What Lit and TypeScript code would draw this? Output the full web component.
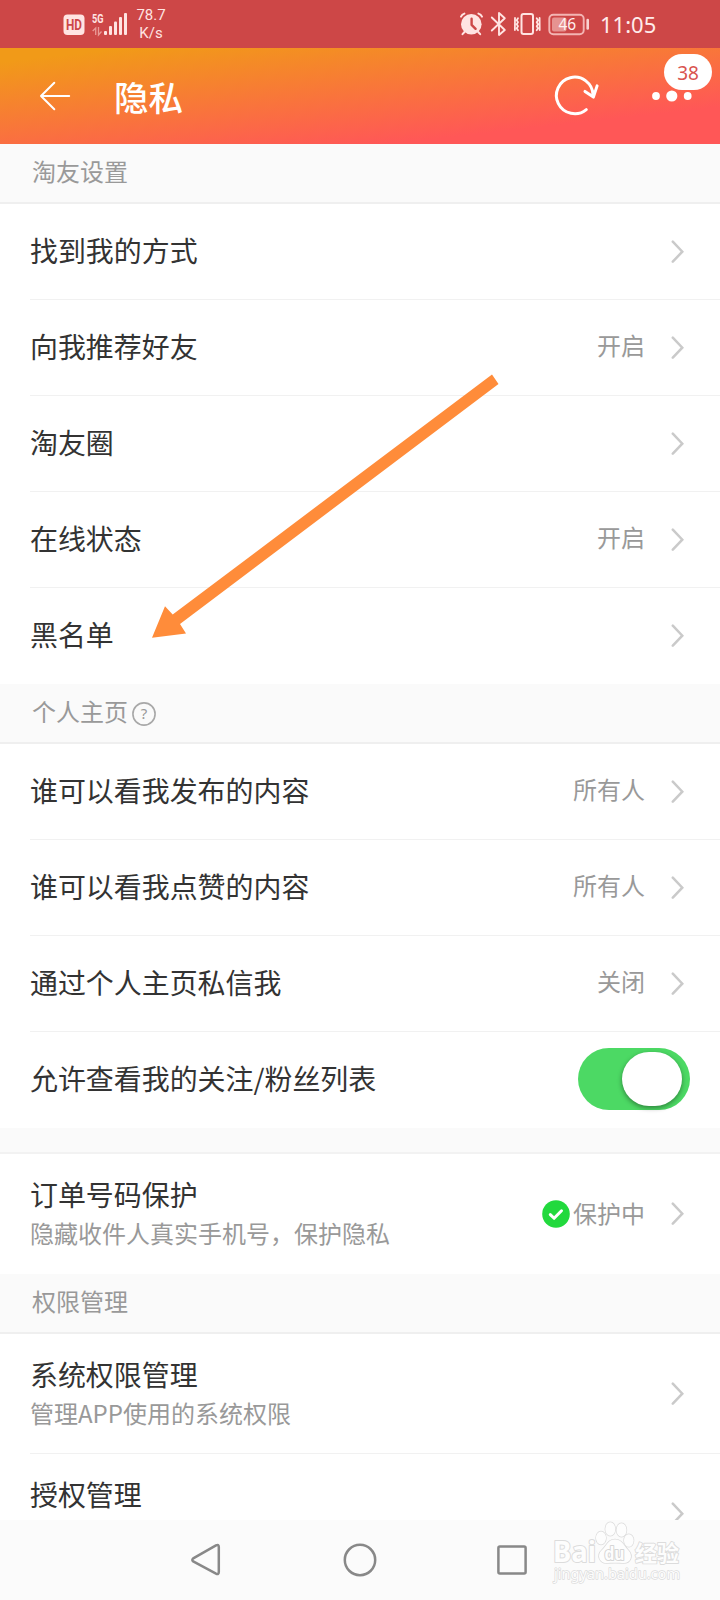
import { LitElement, html, css, svg, nothing } from "lit";
import { customElement, property } from "lit/decorators.js";

@customElement("status-bar")
class StatusBar extends LitElement {
  static styles = css`
    :host { display: flex; height: 48px; background: #cd4747; color: #ffe4e2; }
    .left { display: flex; align-items: flex-start; padding-left: 60px; flex: 1; }
    .right { display: flex; align-items: flex-start; }
    svg { display: block; }
    .speed { font: 15px/18px Roboto, sans-serif; text-align: center; padding-top: 6px; width: 34px; margin-left: 4px; }
    .time { font: 22px/49px "Noto Sans", sans-serif; width: 129px; padding-left: 9px; box-sizing: border-box; color: #ffeceb; }
  `;
  render() {
    return html`
      <div class="left">
        <svg width="70" height="48" viewBox="60 0 70 48">
          <rect x="63.5" y="14.5" width="21" height="20.5" rx="4" fill="#ffe4e2" />
          <text x="74" y="29.8" text-anchor="middle" textLength="16" lengthAdjust="spacingAndGlyphs" font-family="Roboto" font-weight="700" font-size="14" fill="#cd4747">HD</text>
          <text x="92" y="22.8" textLength="11.5" lengthAdjust="spacingAndGlyphs" font-family="Roboto" font-weight="700" font-size="13" fill="#ffe4e2">5G</text>
          <g stroke="#e99a98" stroke-width="1.3" fill="none"><path d="M95.7 35V28l-3 3M98.5 27v8l3-3.5" /></g>
          <g fill="#ffe4e2">
            <rect x="104" y="31" width="3" height="4" rx="1" />
            <rect x="109" y="26" width="3" height="9" rx="1" />
            <rect x="114" y="21.5" width="3" height="13.5" rx="1" />
            <rect x="119" y="17" width="3" height="18" rx="1" />
            <rect x="124" y="13" width="3" height="22" rx="1" />
          </g>
        </svg>
        <div class="speed">78.7<br />K/s</div>
      </div>
      <div class="right">
        <svg width="141" height="48" viewBox="450 0 141 48" fill="none" stroke="#ffe4e2" stroke-width="2" stroke-linecap="round" stroke-linejoin="round">
          <circle cx="471.3" cy="24.3" r="10.3" fill="#ffe4e2" stroke="none" />
          <path d="M461 16.6Q462 14.4 464.4 13.6M478.4 13.6Q481 14.4 482 16.6M464.5 32l-2 2.2M478.2 32l2 2.2" />
          <path d="M471.6 18.8v6l4 4" stroke="#cd4747" stroke-width="2.4" />
          <path d="M491.8 17.5l13 12.5-5.8 5V13l5.8 5.2-13 12.3" stroke-width="1.9" />
          <rect x="521.5" y="14" width="11.5" height="20" rx="2" />
          <path d="M518 18.2l-1.3 2 1.3 2-1.3 2 1.3 2-1.3 2 1.3 2M515 18l-.1 12M536.7 18.2l1.3 2-1.3 2 1.3 2-1.3 2 1.3 2-1.3 2M539.6 18l.1 12" stroke-width="1.8" />
          <rect x="549.3" y="14.8" width="34.4" height="19.4" rx="4" stroke="#f3b5b3" stroke-width="1.9" />
          <rect x="552" y="17.5" width="14.5" height="14" rx="2" fill="#e69391" stroke="none" />
          <path d="M587.7 20v8.5" stroke="#f9d2d0" stroke-width="2.6" />
          <text x="567.3" y="30" text-anchor="middle" font-family="Noto Sans" font-size="15.5" fill="#fff0ef" stroke="none">46</text>
        </svg>
        <div class="time">11:05</div>
      </div>
    `;
  }
}

@customElement("title-bar")
class TitleBar extends LitElement {
  static styles = css`
    :host { display: flex; position: relative; height: 96px; color: #fff; background: linear-gradient(173.6deg, #f19a18 8%, #ff5757 79%); }
    svg { display: block; }
    .title { flex: 1; padding-left: 34px; font: 500 34.5px/96px "Noto Sans CJK SC", sans-serif; }
    .badge { position: absolute; right: 8px; top: 6px; width: 48px; height: 36px; border-radius: 18px; background: #fff; color: #d9534f; text-align: center; font: 19px/38px "Noto Sans", sans-serif; }
  `;
  render() {
    return html`
      <svg width="80" height="96" viewBox="0 48 80 96" fill="none" stroke="#fff" stroke-width="2" stroke-linecap="round" stroke-linejoin="round">
        <path d="M54.3 82.7L41 96l13.3 13.2M41 96h28.2" />
      </svg>
      <div class="title">隐私</div>
      <svg width="180" height="96" viewBox="540 48 180 96" fill="none" stroke="#fff" stroke-width="3" stroke-linecap="round" stroke-linejoin="round">
        <path d="M586.3 109.6A18.3 18.3 0 1 1 593 95" />
        <path d="M585 91.4l8.4 5.7 3.7-11.2" />
        <g fill="#fff" stroke="none">
          <circle cx="656" cy="96" r="3.9" /><circle cx="671.8" cy="96" r="5.6" /><circle cx="687.7" cy="96" r="3.9" />
        </g>
      </svg>
      <div class="badge">38</div>
    `;
  }
}

@customElement("section-head")
class SectionHead extends LitElement {
  static styles = css`
    :host { display: flex; align-items: center; box-sizing: border-box; height: 60px; padding: 0 32px 4px; background: #fafafa; border-bottom: 2px solid #efefef; color: #999; font: 24px/36px "Noto Sans CJK SC", sans-serif; }
    svg { display: block; margin: 5px 0 0 4px; }
  `;
  @property() label = "";
  @property({ type: Boolean }) help = false;
  render() {
    return html`<span>${this.label}</span>${this.help
      ? html`<svg width="24" height="24" viewBox="0 0 24 24"><circle cx="12" cy="12" r="11.1" fill="none" stroke="#a8a8a8" stroke-width="1.6" /><text x="12" y="17.2" text-anchor="middle" font-family="Noto Sans" font-size="15" fill="#999">?</text></svg>`
      : nothing}`;
  }
}

@customElement("setting-row")
class SettingRow extends LitElement {
  static styles = css`
    :host { display: block; padding-left: 30px; background: #fff; font-family: "Noto Sans CJK SC", sans-serif; }
    .row { display: flex; align-items: center; box-sizing: border-box; height: 96px; padding-right: 36px; border-bottom: 1px solid #f1f1f1; }
    :host([last]) .row { border-bottom-color: transparent; }
    .tall { height: 120px; }
    .text { flex: 1; }
    .name { font-size: 27.95px; line-height: 40px; color: #333; margin-top: -4px; }
    .tall .name { margin-top: -1px; }
    .desc { font-size: 24px; line-height: 38px; min-height: 38px; color: #999; }
    .value { font-size: 24px; line-height: 36px; color: #999; margin: -6px 26px 0 4px; }
    .tall .value { margin: -1px 26px 0 3px; }
    svg { display: block; }
    .toggle { display: flex; justify-content: flex-end; box-sizing: border-box; width: 112px; height: 62px; padding: 4px 8px; margin: -2px -6px 0 0; border-radius: 31px; background: #4cd964; }
    .knob { width: 60px; height: 54px; border-radius: 27px; background: #fff; box-shadow: 0 2px 5px rgba(0, 0, 0, 0.4); }
  `;
  @property() name = "";
  @property() desc = "";
  @property() value = "";
  @property({ type: Boolean }) check = false;
  @property({ type: Boolean }) toggle = false;
  @property({ type: Boolean }) last = false;
  render() {
    return html`<div class="row ${this.desc ? "tall" : ""}">
      <div class="text">
        <div class="name">${this.name}</div>
        ${this.desc ? html`<div class="desc">${this.desc}</div>` : nothing}
      </div>
      ${this.check
        ? html`<svg width="28" height="28" viewBox="0 0 28 28"><circle cx="14" cy="14" r="13.8" fill="#22d93d" /><path d="M8.3 14.6l3.8 3.7 7.4-7.5" fill="none" stroke="#fff" stroke-width="3" stroke-linecap="round" stroke-linejoin="round" /></svg>`
        : nothing}
      ${this.value ? html`<div class="value">${this.value}</div>` : nothing}
      ${this.toggle
        ? html`<div class="toggle"><div class="knob"></div></div>`
        : html`<svg width="13" height="24" viewBox="0 0 13 24"><path d="M1.8 1.7L11.3 11.7 1.8 21.7" fill="none" stroke="#cacaca" stroke-width="2.5" stroke-linecap="round" stroke-linejoin="miter" /></svg>`}
    </div>`;
  }
}

@customElement("nav-bar")
class NavBar extends LitElement {
  static styles = css`
    :host { display: block; position: relative; height: 80px; background: #fbfbfb; }
    svg { display: block; }
    .mark { position: absolute; right: 34px; top: -2px; }
  `;
  render() {
    const toes = [
      [601, 1538, 5, 6.5], [610.3, 1529, 5, 6.7], [621.5, 1530, 5, 6.7], [628.8, 1540.5, 4.8, 6.3],
    ];
    return html`
      <svg width="720" height="80" viewBox="0 1520 720 80" fill="none" stroke="#888" stroke-width="2.5" stroke-linejoin="round">
        <path d="M193.2 1558.4L216 1545.3Q218.8 1544 218.8 1547V1572Q218.8 1575 216 1573.6L193.2 1561.4Q191.4 1560 193.2 1558.4Z" />
        <circle cx="360" cy="1560" r="15.2" />
        <rect x="498.4" y="1546.4" width="27.2" height="27.2" rx="1.5" />
      </svg>
      <svg class="mark" width="140" height="70" viewBox="546 1518 140 70" fill="#fdfdfd" stroke="#dcdcdc" stroke-width="2" paint-order="stroke" stroke-linejoin="round">
        <g font-family="Noto Sans" font-weight="700">
          <text x="553" y="1561.5" font-size="28" textLength="43" lengthAdjust="spacingAndGlyphs">Bai</text>
          ${toes.map(([x, y, a, b]) => svg`<ellipse cx=${x} cy=${y} rx=${a} ry=${b} stroke-width="1.4" />`)}
          <path d="M615 1539.5C608 1539.5 606.5 1546 602 1550C596 1555.5 600 1563.5 607 1563C612 1562.5 618 1562.5 623 1563C630.5 1563.5 633.5 1556 628.5 1550.5C624 1546 622 1539.5 615 1539.5Z" stroke-width="1.6" />
          <text x="604.5" y="1560" font-size="18" textLength="20" lengthAdjust="spacingAndGlyphs" stroke-width="2.2" stroke="#d6d6d6">du</text>
        </g>
        <text x="635" y="1560.5" font-family="Noto Sans CJK SC" font-weight="700" font-size="22" textLength="44" stroke-width="1.8">经验</text>
        <text x="554" y="1579" font-family="Noto Sans" font-size="14.5" textLength="126" lengthAdjust="spacingAndGlyphs" stroke-width="1.4">jingyan.baidu.com</text>
      </svg>
    `;
  }
}

@customElement("app-root")
class AppRoot extends LitElement {
  static styles = css`
    :host { display: flex; flex-direction: column; position: relative; width: 720px; height: 1600px; overflow: hidden; background: #fff; }
    .list { flex: 1; min-height: 0; overflow: hidden; }
    .gap { box-sizing: border-box; height: 26px; background: #fafafa; border-bottom: 2px solid #f2f2f2; }
    .arrow { position: absolute; left: 140px; top: 360px; }
  `;
  render() {
    return html`
      <status-bar></status-bar>
      <title-bar></title-bar>
      <div class="list">
        <section-head label="淘友设置"></section-head>
        <setting-row name="找到我的方式"></setting-row>
        <setting-row name="向我推荐好友" value="开启"></setting-row>
        <setting-row name="淘友圈"></setting-row>
        <setting-row name="在线状态" value="开启"></setting-row>
        <setting-row name="黑名单" last></setting-row>
        <section-head label="个人主页" help></section-head>
        <setting-row name="谁可以看我发布的内容" value="所有人"></setting-row>
        <setting-row name="谁可以看我点赞的内容" value="所有人"></setting-row>
        <setting-row name="通过个人主页私信我" value="关闭"></setting-row>
        <setting-row name="允许查看我的关注/粉丝列表" toggle last></setting-row>
        <div class="gap"></div>
        <setting-row name="订单号码保护" desc="隐藏收件人真实手机号，保护隐私" value="保护中" check last></setting-row>
        <section-head label="权限管理"></section-head>
        <setting-row name="系统权限管理" desc="管理APP使用的系统权限"></setting-row>
        <setting-row name="授权管理" desc=" " last></setting-row>
      </div>
      <nav-bar></nav-bar>
      <svg class="arrow" width="370" height="290" viewBox="140 360 370 290">
        <path d="M152 637.8L165 606.3L172.7 614.5L492 374.5L498.5 384L180 624L186 633.5Z" fill="#ff8c3a" />
      </svg>
    `;
  }
}
